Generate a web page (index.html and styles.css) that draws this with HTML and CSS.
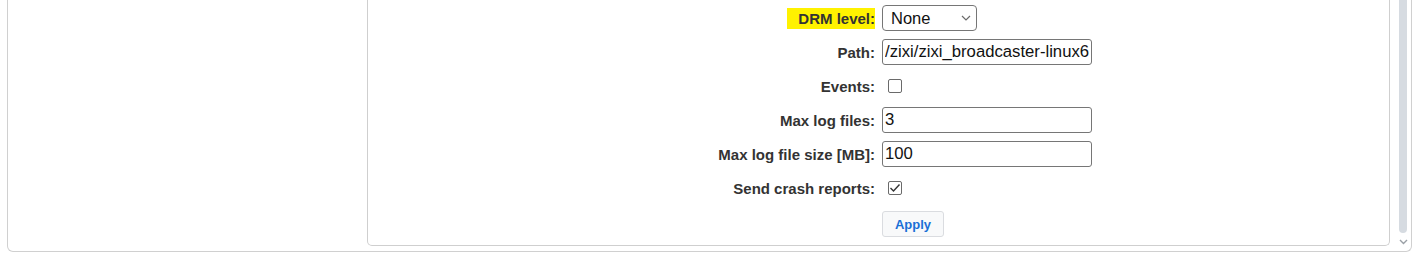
FILE: index.html
```html
<!DOCTYPE html>
<html lang="en">
<head>
  <meta charset="UTF-8">
  <meta name="viewport" content="width=device-width, initial-scale=1.0">
  <title>Broadcaster settings</title>
  <link rel="stylesheet" href="styles.css">
</head>
<body>

  <div class="caixa-externa">
    <div class="coluna-vazia"></div>

    <!-- Painel de configuracoes -->
    <div class="painel">
      <div class="formulario">
        <label class="rotulo"><span class="marca">DRM level:</span></label>
        <div class="campo">
          <div class="seletor">
            <span>None</span>
            <svg width="10" height="6" viewBox="0 0 10 6"><path d="M1 1 L5 5 L9 1" fill="none" stroke="#6b6b6b" stroke-width="1.2"/></svg>
          </div>
        </div>

        <label class="rotulo">Path:</label>
        <div class="campo"><input type="text" class="texto" value="/zixi/zixi_broadcaster-linux64/"></div>

        <label class="rotulo">Events:</label>
        <div class="campo"><span class="caixa-marcar"></span></div>

        <label class="rotulo">Max log files:</label>
        <div class="campo"><input type="text" class="texto" value="3"></div>

        <label class="rotulo">Max log file size [MB]:</label>
        <div class="campo"><input type="text" class="texto" value="100"></div>

        <label class="rotulo">Send crash reports:</label>
        <div class="campo">
          <span class="caixa-marcar">
            <svg width="12" height="12" viewBox="0 0 12 12"><path d="M1.5 6 L4.5 9 L10.5 2.5" fill="none" stroke="#333" stroke-width="1.4"/></svg>
          </span>
        </div>
      </div>

      <div class="linha-botao">
        <button class="botao-aplicar">Apply</button>
      </div>
    </div>

    <!-- Barra de rolagem -->
    <div class="rolagem">
      <div class="polegar"></div>
      <svg width="9" height="6" viewBox="0 0 9 6"><path d="M1 1 L4.5 4.5 L8 1" fill="none" stroke="#9aa0a6" stroke-width="1.4"/></svg>
    </div>
  </div>

</body>
</html>
```

FILE: styles.css
```css
/* Reset basico */
* {
  margin: 0;
  padding: 0;
  box-sizing: border-box;
}

body {
  font-family: "Liberation Sans", Arial, sans-serif;
  background-color: #fff;
  color: #333;
}

/* Caixa externa com rolagem */
.caixa-externa {
  display: flex;
  align-items: stretch;
  width: 1405px;
  height: 252px;
  margin-left: 7px;
  padding-bottom: 5px;
  padding-right: 4px;
  border: 1px solid #d0d0d0;
  border-top: none;
  border-radius: 0 0 6px 6px;
}

.coluna-vazia {
  width: 359px;
}

.painel {
  width: 1023px;
  border: 1px solid #cfcfcf;
  border-top: none;
  border-radius: 0 0 5px 5px;
  padding-top: 1px;
}

.formulario {
  display: grid;
  grid-template-columns: 507px auto;
  grid-auto-rows: 34px;
  column-gap: 7px;
  align-items: center;
}

.rotulo {
  text-align: right;
  font-size: 15px;
  font-weight: bold;
  color: #333;
}

.marca {
  background-color: #fff200;
  padding: 2px 0 2px 11px;
}

.campo {
  display: flex;
  align-items: center;
}

.seletor {
  display: flex;
  align-items: center;
  justify-content: space-between;
  width: 95px;
  height: 26px;
  padding: 0 5px 0 8px;
  border: 1px solid #767676;
  border-radius: 4px;
  font-size: 16.5px;
  color: #111;
}

.texto {
  width: 210px;
  height: 26px;
  padding: 0 2px;
  border: 1px solid #767676;
  border-radius: 3px;
  font-family: "Liberation Sans", Arial, sans-serif;
  font-size: 16.7px;
  color: #111;
  outline: none;
}

.caixa-marcar {
  display: flex;
  align-items: center;
  justify-content: center;
  width: 14px;
  height: 14px;
  margin-left: 6px;
  border: 1.5px solid #6a6a6a;
  border-radius: 2px;
  background-color: #fff;
}

.linha-botao {
  padding-left: 514px;
  margin-top: 6px;
}

.botao-aplicar {
  width: 62px;
  height: 26px;
  background-color: #f8f9fa;
  border: 1px solid #dadce0;
  border-radius: 3px;
  font-family: "Liberation Sans", Arial, sans-serif;
  font-size: 13px;
  font-weight: bold;
  color: #1a6fd6;
  cursor: pointer;
}

/* Barra de rolagem desenhada */
.rolagem {
  display: flex;
  flex-direction: column;
  align-items: center;
  width: 8px;
  margin-left: 9px;
  margin-bottom: -4px;
}

.polegar {
  width: 8px;
  height: 233px;
  background-color: #d6dbe1;
  border-radius: 0 0 4px 4px;
}

.rolagem svg {
  margin-top: 6px;
}
```
